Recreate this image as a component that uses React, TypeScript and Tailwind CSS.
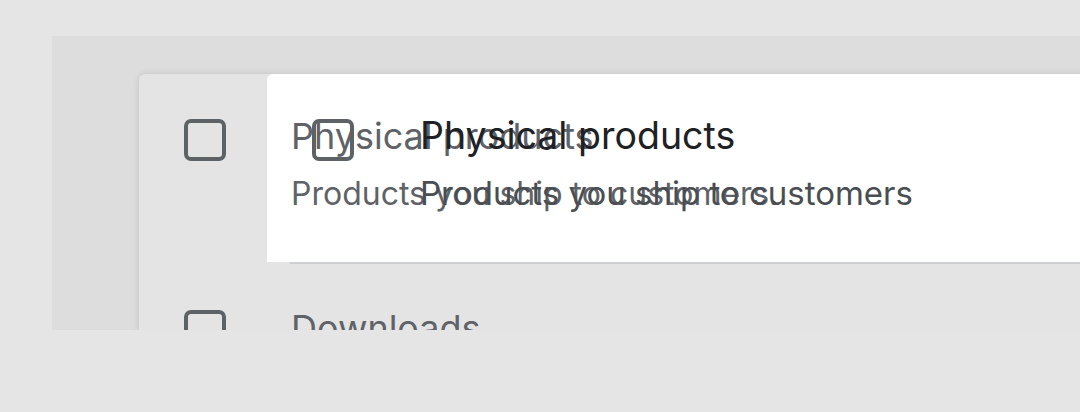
import React from "react";

const font = { fontFamily: "Inter, 'Noto Sans', sans-serif" };

function Box() {
  return <div className="w-[42px] h-[42px] shrink-0 rounded-[7px] border-[4px] border-[#5d6267]" />;
}

export default function App() {
  return (
    <div className="w-[1080px] h-[412px] bg-[#e5e5e5] overflow-hidden pt-[36px] pl-[52px]" style={font}>
      <div className="h-[294px] bg-[#dddddd] overflow-hidden pt-[38px] pl-[87px]">
        <div className="relative w-[1100px] h-[400px] bg-[#e4e4e4] rounded-tl-[6px] shadow-[0_0_6px_rgba(0,0,0,0.12)]">
          {/* dragged overlay background */}
          <div className="absolute left-[128px] top-0 right-0 h-[188px] bg-white rounded-tl-[6px]" />

          {/* base row */}
          <div className="relative flex items-start h-[188px] pl-[45px] pt-[45px]">
            <Box />
            <div className="ml-[65px] whitespace-nowrap">
              <div className="text-[36px] leading-[36px] text-[#5f6368] -mt-px">Physical products</div>
              <div className="mt-[24px] text-[32px] leading-[31px] text-[#5f6368]">Products you ship to customers.</div>
            </div>
          </div>
          <div className="ml-[151px] h-[2px] bg-[#cdd0d0]" />
          <div className="relative flex items-start pl-[45px] pt-[46px]">
            <Box />
            <div className="ml-[65px] whitespace-nowrap text-[36px] leading-[36px] text-[#5f6368]">Downloads</div>
          </div>

          {/* overlay content */}
          <div className="absolute left-[173px] top-[45px] flex items-start">
            <Box />
            <div className="ml-[66px] whitespace-nowrap">
              <div className="text-[37.5px] leading-[36px] text-[#202124] -mt-px">Physical products</div>
              <div className="mt-[24px] text-[33px] leading-[31px] text-[#4a4e53]">Products you ship to customers</div>
            </div>
          </div>
        </div>
      </div>
    </div>
  );
}
